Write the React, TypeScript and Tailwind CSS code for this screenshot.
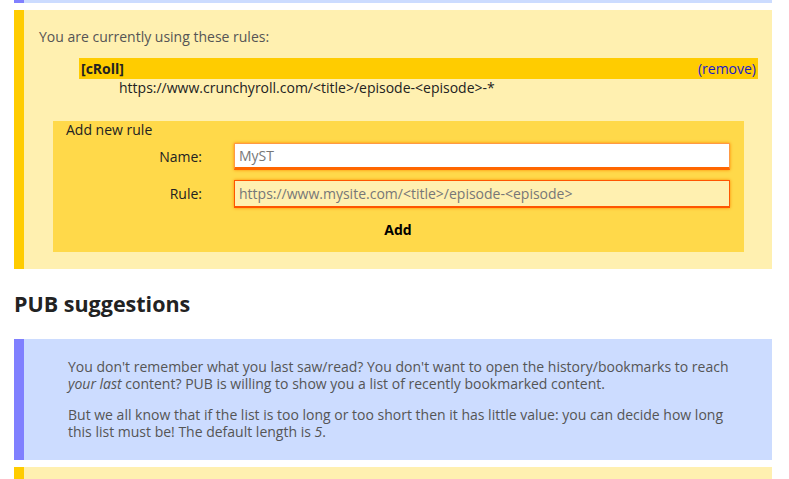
import React from 'react';

const font = { fontFamily: '"Open Sans", "Liberation Sans", sans-serif' };

const rules = [{ name: 'cRoll', pattern: 'https://www.crunchyroll.com/<title>/episode-<episode>-*' }];

export default function App() {
  return (
    <div className="min-h-screen bg-white pl-[14px] pr-[17px] text-[14px] leading-[17px]" style={font}>
      <div className="h-[3px] border-l-[10px] border-[#8080ff] bg-[#ccdcff]" />

      <section className="mt-[7px] border-l-[10px] border-[#ffcc00] bg-[#fff0b0] pb-[17px] pl-[15px] pr-[14px] pt-[17.5px]">
        <p className="text-[#555]">You are currently using these rules:</p>

        <dl className="mt-[13.5px] pl-[40px]">
          {rules.map((rule) => (
            <div key={rule.name}>
              <dt className="flex h-[21px] items-center justify-between bg-[#ffcc00] px-[2px] text-[#222]">
                <span className="font-bold">[{rule.name}]</span>
                <a href="#" className="text-[#1a1acc]">
                  (remove)
                </a>
              </dt>
              <dd className="pl-[40px] text-[#222]">{rule.pattern}</dd>
            </div>
          ))}
        </dl>

        <div className="ml-[14px] mr-[14px] mt-[33.5px] bg-[#ffd94a] pb-[13.5px] pl-[13px] pr-[14px]">
          <div className="-mt-[8.5px] text-[#222]">Add new rule</div>

          <div className="mt-[4.5px] grid grid-cols-[136px_1fr] items-center gap-x-[32px] gap-y-[10px]">
            <label className="text-right text-[#222]">Name:</label>
            <input
              placeholder="MyST"
              className="h-[27px] w-full border border-b-[3px] border-[#ff9944] border-b-[#ff6600] bg-white px-[4px] text-[14px] text-[#222] shadow-[0_0_3px_#ff8800] outline-none placeholder:text-[#777]"
              style={font}
            />
            <label className="text-right text-[#222]">Rule:</label>
            <input
              placeholder="https://www.mysite.com/<title>/episode-<episode>"
              className="h-[28px] w-full border border-b-[2px] border-[#ff5500] bg-[#fff0b0] px-[4px] text-[14px] text-[#222] shadow-[0_0_3px_#ff8800] outline-none placeholder:text-[#777]"
              style={font}
            />
          </div>

          <div className="mt-[13.5px] text-center">
            <button type="button" className="font-bold text-black">
              Add
            </button>
          </div>
        </div>
      </section>

      <h2 className="mt-[22px] text-[21.5px] font-bold leading-[26px] text-[#222]">PUB suggestions</h2>

      <section className="mt-[22px] border-l-[10px] border-[#8080ff] bg-[#ccdcff] pb-[19.5px] pl-[44px] pr-[30px] pt-[19.5px] text-[#555]">
        <p>
          You don't remember what you last saw/read? You don't want to open the history/bookmarks to reach{' '}
          <em>your last</em> content? PUB is willing to show you a list of recently bookmarked content.
        </p>
        <p className="mt-[14px]">
          But we all know that if the list is too long or too short then it has little value: you can decide how long
          this list must be! The default length is <em>5</em>.
        </p>
      </section>

      <div className="mt-[7px] h-[20px] border-l-[10px] border-[#ffcc00] bg-[#fff0b0]" />
    </div>
  );
}
